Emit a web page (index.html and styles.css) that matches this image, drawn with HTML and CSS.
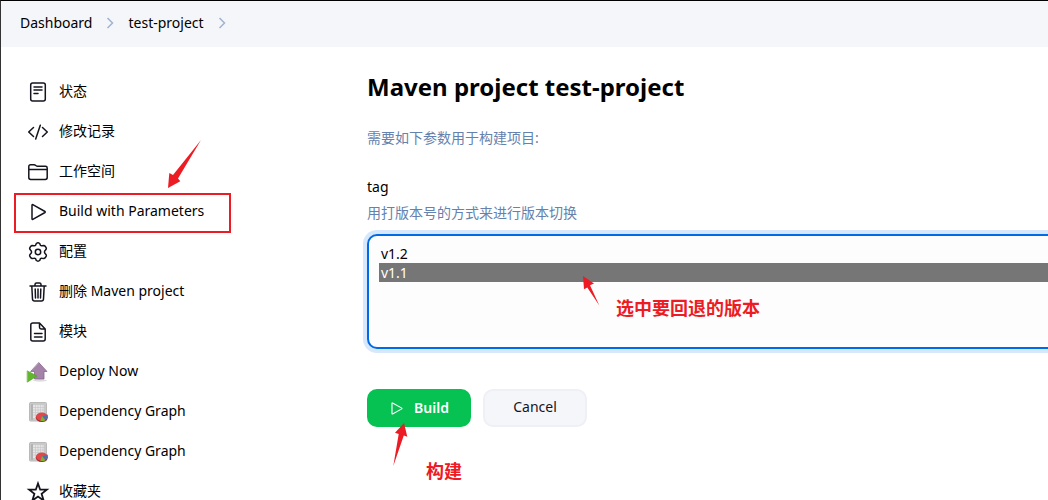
FILE: index.html
```html
<!DOCTYPE html>
<html lang="zh-CN">
<head>
<meta charset="utf-8">
<meta name="viewport" content="width=device-width, initial-scale=1">
<title>test-project</title>
<link rel="stylesheet" href="styles.css">
</head>
<body>
<svg class="sprite" aria-hidden="true">
  <symbol id="play" viewBox="0 0 20 20"><path d="M4 3.200v13.600c0 .5.400.7.800.5l12.200-6.800c.4-.3.400-.7 0-1L4.800 2.700c-.4-.2-.8 0-.8.500z"/></symbol>
  <symbol id="chevron" viewBox="0 0 8 12"><path d="M1.500 1L6.500 6l-5 5"/></symbol>
  <symbol id="graph" viewBox="0 0 20 20">
    <rect x="1.500" y="0.500" width="17" height="18.500" rx="1" fill="#c9c9c9" stroke="#b9b9b9" stroke-width="1"/>
    <rect x="5" y="3" width="11" height="13" fill="#e6e6e6"/>
    <path d="M5 5.500h11M5 8h11M5 10.500h11M5 13h11M7.500 3v13M10 3v13M12.500 3v13M15 3v13" stroke="#c4c4c4" stroke-width=".6"/>
    <path d="M4 2.500v15" stroke="#999" stroke-width="1"/>
    <ellipse cx="13.800" cy="15.600" rx="6" ry="4.400" fill="#a5262c"/>
    <ellipse cx="13.800" cy="14.700" rx="5.700" ry="4.100" fill="#e2474b"/>
    <path d="M14 14.500l5.600-2c.6 2-.2 4.200-2.200 5.200z" fill="#4b71ae"/>
    <path d="M14 14l3.400 4.200c-1.500.8-3.200 1-5 .7z" fill="#73b82c"/>
  </symbol>
</svg>
<div class="page">
  <nav class="breadcrumbs" aria-label="Breadcrumb">
    <a href="#">Dashboard</a>
    <svg class="chevron"><use href="#chevron"/></svg>
    <a href="#">test-project</a>
    <svg class="chevron"><use href="#chevron"/></svg>
  </nav>
  <div class="columns">
    <nav class="tasks" aria-label="Tasks">
      <a class="task" href="#"><svg class="icon" viewBox="0 0 20 20"><rect x="2.700" y="1" width="14.600" height="18" rx="2"/><path d="M6 5h8M6 8h8M6 11.500h4"/></svg>状态</a>
      <a class="task" href="#"><svg class="icon" viewBox="0 0 20 20"><path d="M5.500 5.500L.7 10l4.800 4.500M14.500 5.500l4.800 4.500-4.800 4.500M12.300 3.300L7.700 17"/></svg>修改记录</a>
      <a class="task" href="#"><svg class="icon" viewBox="0 0 20 20"><path d="M.8 15.500v-11c0-1 .7-1.700 1.700-1.700h3.600c1.600 0 1.800 1.400 3.400 1.400h8c1 0 1.700.7 1.700 1.700v9.600c0 1.200-.7 1.900-1.900 1.900H2.700c-1.200 0-1.900-.7-1.900-1.900zM.8 7.500h18.400"/></svg>工作空间</a>
      <a class="task" href="#"><svg class="icon"><use href="#play"/></svg>Build with Parameters
        <span class="marker"></span>
        <svg class="arrow arrow-task" viewBox="0 0 34 48"><path d="M0 48l1.300-15 3.700 2L33 0 10 38.500l2.300 2.700z"/></svg>
      </a>
      <a class="task" href="#"><svg class="icon" viewBox="0 0 20 20"><circle cx="10" cy="10" r="2.700"/><path d="M8.300 1.500Q10 .2 11.700 1.500L12.400 3.300Q13 4 14 3.800L16 3.500Q17.500 4 18.300 6Q18.500 7 17.600 7.900L16.700 9Q16.300 10 16.700 11L17.600 12.100Q18.500 13 18.300 14Q17.500 16 16 16.500L14 16.200Q13 16 12.400 16.700L11.700 18.500Q10 19.800 8.300 18.500L7.600 16.700Q7 16 6 16.200L4 16.500Q2.500 16 1.700 14Q1.500 13 2.400 12.100L3.300 11Q3.700 10 3.300 9L2.400 7.900Q1.500 7 1.700 6Q2.500 4 4 3.500L6 3.800Q7 4 7.600 3.300z"/></svg>配置</a>
      <a class="task" href="#"><svg class="icon" viewBox="0 0 20 20"><path d="M2 4h16M7 4V2.500C7 1.500 7.500 1 8.500 1h3c1 0 1.500.5 1.500 1.500V4M3.800 4l.7 13c.1 1.300.8 2 2 2h7c1.200 0 1.900-.7 2-2l.7-13M7.200 7l.3 9M10 7v9M12.800 7l-.3 9"/></svg>删除 Maven project</a>
      <a class="task" href="#"><svg class="icon" viewBox="0 0 20 20"><path d="M11.500 1H4.800c-1.300 0-2 .7-2 2v14c0 1.300.7 2 2 2h10.400c1.300 0 2-.7 2-2V7zM11.500 1v4.300c0 1.200.5 1.700 1.700 1.700h4M6.500 11.500h7.500M6.500 15h7.500"/></svg>模块</a>
      <a class="task" href="#"><svg class="icon picture" viewBox="0 0 20 20"><ellipse cx="12" cy="18.500" rx="7" ry="1.200" fill="#ddd"/><path d="M11 .8L19 9.500h-3V17H6.500V9.500H3z" fill="#a582a8" stroke="#89668e" stroke-width=".8"/><path d="M-.5 9l9.500 5-9.500 6z" fill="#62b62d" stroke="#4c9b23" stroke-width=".6"/></svg>Deploy Now</a>
      <a class="task" href="#"><svg class="icon picture"><use href="#graph"/></svg>Dependency Graph</a>
      <a class="task" href="#"><svg class="icon picture"><use href="#graph"/></svg>Dependency Graph</a>
      <a class="task" href="#"><svg class="icon star" viewBox="0 0 20 20"><path d="M10 1.500l2.200 6.200h6.600l-5.200 4.100 2 6.700L10 14.500l-5.600 4 2-6.700L1.200 7.700h6.600z"/></svg>收藏夹</a>
    </nav>
    <main class="main">
      <h1>Maven project test-project</h1>
      <p class="muted intro">需要如下参数用于构建项目:</p>
      <form>
        <label class="name" for="tag">tag</label>
        <p class="muted">用打版本号的方式来进行版本切换</p>
        <div class="field">
          <select id="tag" size="5">
            <option>v1.2</option>
            <option selected>v1.1</option>
          </select>
          <svg class="arrow arrow-version" viewBox="0 0 17 30"><path d="M0 0l11 7.600-4 1.700L16.300 29.500 4.300 11.600 1 13.300z"/></svg>
          <span class="note note-version">选中要回退的版本</span>
        </div>
        <div class="buttons">
          <button class="button primary" type="submit"><svg class="play"><use href="#play"/></svg>Build</button>
          <button class="button" type="button">Cancel</button>
          <svg class="arrow arrow-build" viewBox="0 0 15 43"><path d="M11 0l3.300 13.700-3.500-1.300L.3 43 5.700 11 2 9.700z"/></svg>
          <span class="note note-build">构建</span>
        </div>
      </form>
    </main>
  </div>
</div>
</body>
</html>
```
FILE: styles.css
```css
* {
  box-sizing: border-box;
}

body {
  margin: 0;
  color: #000;
  background: #fff;
  font: 14px/20px "Noto Sans", "Noto Sans CJK SC", sans-serif;
  overflow: hidden;
}

a {
  color: inherit;
  text-decoration: none;
}

h1,
p {
  margin: 0;
}

.sprite {
  position: absolute;
  width: 0;
  height: 0;
}

.page {
  border-top: 1px solid #000;
  border-left: 1px solid #333;
}

.breadcrumbs {
  display: flex;
  align-items: center;
  gap: 14px;
  height: 46px;
  padding: 0 19px 2px;
  background: #f5f6f9;
}

.chevron {
  width: 8px;
  height: 12px;
  fill: none;
  stroke: #9fb3d1;
  stroke-width: 1.5;
}

.columns {
  display: grid;
  grid-template-columns: 366px 1fr;
}

.tasks {
  padding: 24px 0 0 27px;
}

.task {
  position: relative;
  display: flex;
  align-items: center;
  gap: 11px;
  height: 40px;
}

.icon {
  flex: none;
  width: 20px;
  height: 20px;
  margin-top: 1px;
  fill: none;
  stroke: #14141f;
  stroke-width: 1.5;
  stroke-linecap: round;
  stroke-linejoin: round;
  overflow: visible;
}

.picture {
  stroke: none;
}

.star {
  stroke-width: 1.8;
  stroke-linejoin: miter;
}

.marker {
  position: absolute;
  left: -14px;
  top: 2px;
  width: 217px;
  height: 40px;
  border: 2px solid #ed1c24;
}

.arrow {
  position: absolute;
  fill: #ed1c24;
}

.arrow-task {
  left: 140px;
  top: -51px;
  width: 34px;
  height: 48px;
}

.main {
  min-width: 0;
  padding-top: 24px;
}

h1 {
  font-size: 24px;
  line-height: 32px;
}

.muted {
  color: #6482ad;
}

.intro {
  margin: 25px 0 29px;
}

.name {
  display: block;
  margin-bottom: 6px;
}

.field {
  position: relative;
  margin: 11px -24px 40px 0;
}

select {
  display: block;
  width: 100%;
  height: 115px;
  padding: 8px 10px;
  border: 2px solid #006be6;
  border-radius: 10px;
  outline: none;
  box-shadow: 0 0 0 4px #d7e8fc;
  background: #fdfdfd;
  color: #000;
  font: inherit;
}

option {
  min-height: 19px;
  padding: 0 2px;
  line-height: 19px;
}

option:checked {
  background: #767676 linear-gradient(#767676, #767676);
  color: #fff;
}

.arrow-version {
  left: 216px;
  top: 42px;
  width: 17px;
  height: 30px;
}

.note {
  position: absolute;
  color: #ed1c24;
  font-size: 18px;
  font-weight: 700;
  line-height: 24px;
  white-space: nowrap;
}

.note-version {
  left: 249px;
  top: 62px;
}

.buttons {
  position: relative;
  display: flex;
  gap: 12px;
}

.button {
  display: flex;
  align-items: center;
  justify-content: center;
  gap: 10px;
  min-width: 104px;
  height: 38px;
  padding: 0 16px 2px;
  border: 2px solid #eff0f5;
  border-radius: 10px;
  background: #f5f6fa;
  color: #14141f;
  font: inherit;
}

.primary {
  padding-bottom: 0;
  border-color: #06c253;
  background: #06c253;
  color: #fff;
  font-weight: 600;
}

.play {
  width: 15px;
  height: 15px;
  fill: none;
  stroke: currentColor;
  stroke-width: 1.5;
}

.arrow-build {
  left: 26px;
  top: 34px;
  width: 15px;
  height: 43px;
}

.note-build {
  left: 59px;
  top: 70px;
}
```
